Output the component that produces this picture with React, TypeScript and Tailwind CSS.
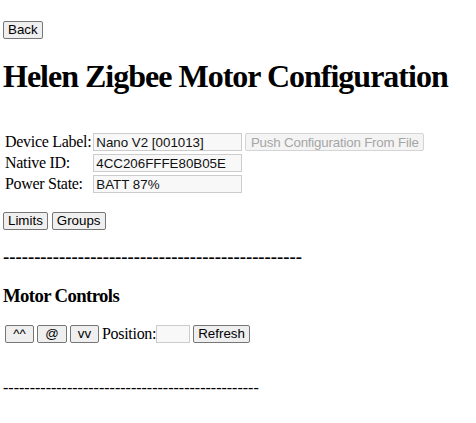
const btn =
  "h-[18px] rounded-[2px] border border-[#767676] bg-[#efefef] px-[4px] font-['Liberation_Sans',Arial,sans-serif] text-[13.33px] leading-[15px] tracking-normal text-black"

const field =
  "block h-[18px] rounded-none border border-[#cccccc] bg-[#f8f8f8] px-[2px] font-['Liberation_Sans',Arial,sans-serif] text-[13.33px] leading-[15px] tracking-normal text-[#111]"

const dashes = (n: number) => "-".repeat(n)

function InfoRow({ label, value, extra }: { label: string; value: string; extra?: React.ReactNode }) {
  return (
    <tr className="h-[19px]">
      <td className="w-[86px] p-0 align-middle whitespace-nowrap">{label}</td>
      <td className="p-0 align-middle">
        <input className={field + " w-[149px]"} value={value} readOnly />
      </td>
      {extra && <td className="p-0 pl-px align-middle">{extra}</td>}
    </tr>
  )
}

export default function App() {
  return (
    <div className="min-h-screen bg-white px-[3px] pt-[20px] font-['Liberation_Serif','Times_New_Roman',serif] text-[16px] leading-[18px] tracking-[-0.3px] text-black">
      <button className={btn}>Back</button>

      <h1 className="mt-[19px] text-[32px] font-bold leading-[37px] tracking-[-1px] whitespace-nowrap">
        Helen Zigbee Motor Configuration
      </h1>

      <table className="mt-[36px] border-separate border-spacing-[2px]">
        <tbody>
          <InfoRow
            label="Device Label:"
            value="Nano V2 [001013]"
            extra={
              <button
                disabled
                className="h-[18px] w-[179px] rounded-[2px] border border-[#d4d4d4] bg-[#f4f4f4] px-[4px] font-['Liberation_Sans',Arial,sans-serif] text-[13.33px] leading-[15px] tracking-[-0.2px] whitespace-nowrap text-[#a6a6a6]"
              >
                Push Configuration From File
              </button>
            }
          />
          <InfoRow label="Native ID:" value="4CC206FFFE80B05E" />
          <InfoRow label="Power State:" value="BATT 87%" />
        </tbody>
      </table>

      <div className="mt-[16px] flex gap-[4px]">
        <button className={btn}>Limits</button>
        <button className={btn}>Groups</button>
      </div>

      <h3 className="mt-[16px] text-[18.72px] font-bold leading-[21px] tracking-normal">{dashes(48)}</h3>

      <h3 className="mt-[18px] text-[18.72px] font-bold leading-[21px] tracking-[-0.6px]">Motor Controls</h3>

      <div className="mt-[19px] flex h-[18px] items-center pl-[2px]">
        <button className={btn + " w-[29px]"}>^^</button>
        <button className={btn + " ml-[3px] w-[30px]"}>@</button>
        <button className={btn + " ml-[3px] w-[29px]"}>vv</button>
        <span className="ml-[3px]">Position:</span>
        <input className={field + " w-[34px]"} readOnly value="" />
        <button className={btn + " ml-[3px]"}>Refresh</button>
      </div>

      <p className="mt-[36px] tracking-normal">{dashes(48)}</p>
    </div>
  )
}
